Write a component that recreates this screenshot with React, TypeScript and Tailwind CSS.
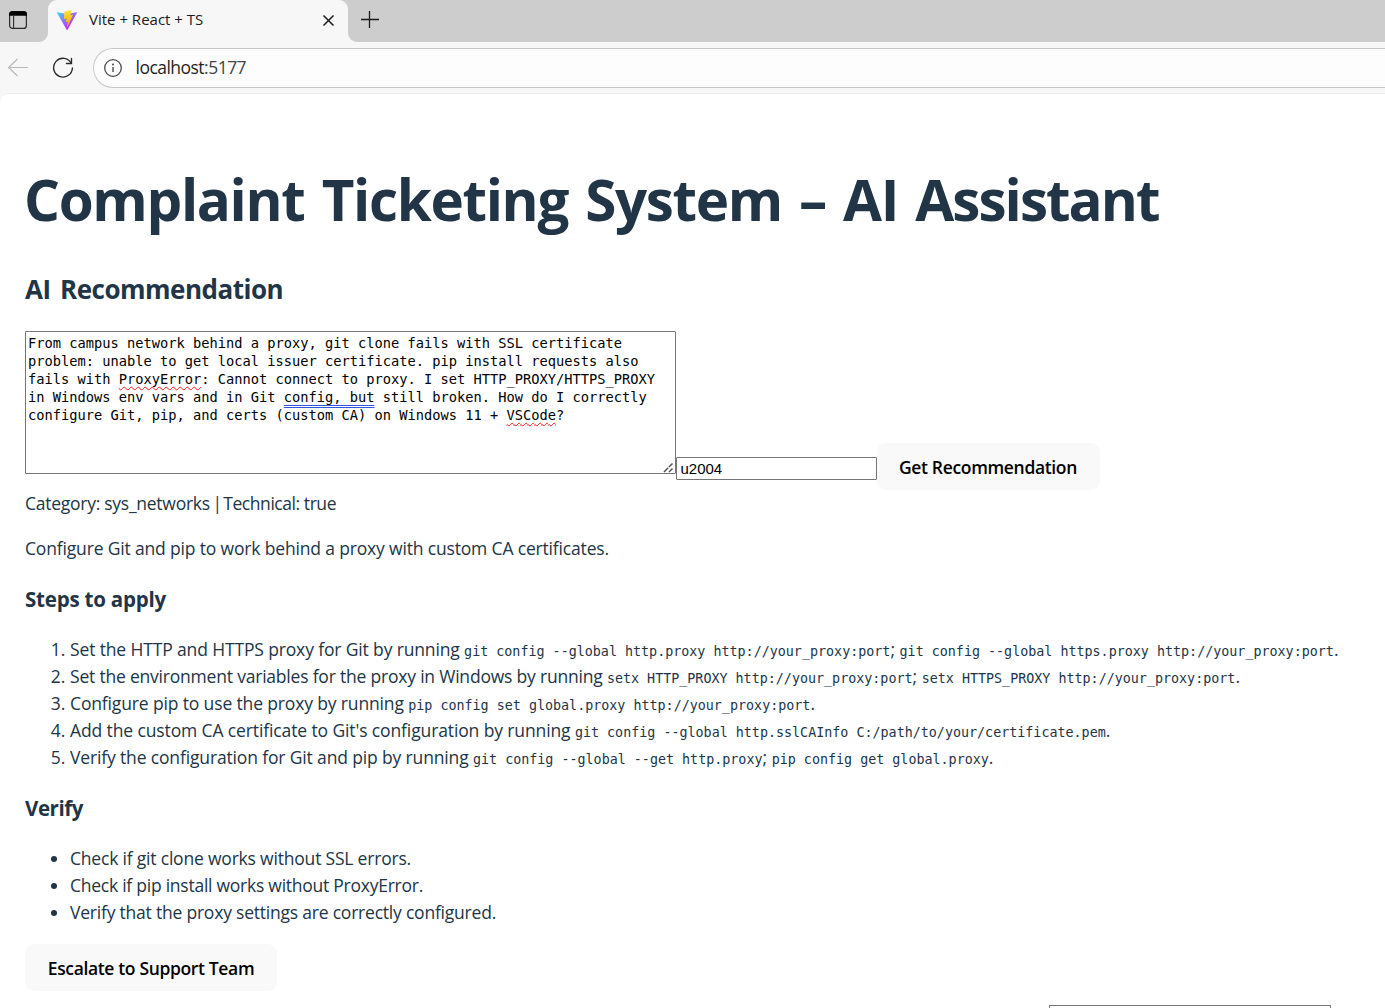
import type { ReactNode } from "react";

function ViteLogo() {
  return (
    <svg width="20" height="20" viewBox="0 0 256 257" aria-hidden="true">
      <defs>
        <linearGradient id="vite-a" x1="-.828%" x2="57.636%" y1="7.652%" y2="78.411%">
          <stop offset="0%" stopColor="#41D1FF" />
          <stop offset="100%" stopColor="#BD34FE" />
        </linearGradient>
        <linearGradient id="vite-b" x1="43.376%" x2="50.316%" y1="2.242%" y2="89.03%">
          <stop offset="0%" stopColor="#FFEA83" />
          <stop offset="8.333%" stopColor="#FFDD35" />
          <stop offset="100%" stopColor="#FFA800" />
        </linearGradient>
      </defs>
      <path
        fill="url(#vite-a)"
        d="M255.153 37.938L134.897 252.976c-2.483 4.44-8.862 4.466-11.382.048L.875 37.958c-2.746-4.814 1.371-10.646 6.827-9.67l120.385 21.517a6.537 6.537 0 0 0 2.322-.004l117.867-21.483c5.438-.991 9.574 4.796 6.877 9.62Z"
      />
      <path
        fill="url(#vite-b)"
        d="M185.432.063L96.44 17.501a3.268 3.268 0 0 0-2.634 3.014l-5.474 92.456a3.268 3.268 0 0 0 3.997 3.378l24.777-5.718c2.318-.535 4.413 1.507 3.936 3.838l-7.361 36.047c-.495 2.426 1.782 4.5 4.151 3.78l15.304-4.649c2.372-.72 4.652 1.36 4.15 3.788l-11.698 56.621c-.732 3.542 3.979 5.473 5.943 2.437l1.313-2.028l72.516-144.72c1.215-2.423-.88-5.186-3.54-4.672l-25.505 4.922c-2.396.462-4.435-1.77-3.759-4.114l16.646-57.705c.677-2.35-1.37-4.583-3.769-4.113Z"
      />
    </svg>
  );
}

function TabStrip() {
  return (
    <div className="flex h-[42px]">
      <div className="flex w-12 rounded-br-[9px] bg-[#cdcdcd] pl-2 pt-[10px]">
        <svg width="20" height="20" viewBox="0 0 20 20" fill="none" aria-hidden="true">
          <rect x="1.6" y="1.6" width="16.8" height="16.8" rx="3" stroke="#2b2b2b" strokeWidth="1.2" />
          <path d="M1 5.8V4.2a3 3 0 0 1 3-3h12a3 3 0 0 1 3 3v1.6z" fill="#000" />
          <path d="M5.6 6v12" stroke="#2b2b2b" strokeWidth="1.1" />
        </svg>
      </div>
      <div className="w-[300px] bg-[#cdcdcd]">
        <div className="flex h-full items-center rounded-t-[9px] bg-[#f7f7f7] pl-[9px] pr-[13px]">
          <div className="mt-[-3px]">
            <ViteLogo />
          </div>
          <span className="ml-3 mt-[-5px] flex-1 whitespace-nowrap text-[15px] leading-5 text-[#1b1b1b]">
            Vite + React + TS
          </span>
          <svg className="mt-[-1px]" width="13" height="13" viewBox="0 0 13 13" aria-hidden="true">
            <path d="M1.5 1.5l10 10M11.5 1.5l-10 10" stroke="#1b1b1b" strokeWidth="1.5" />
          </svg>
        </div>
      </div>
      <div className="flex-1 rounded-bl-[9px] bg-[#cdcdcd] pl-3 pt-[10px]">
        <svg width="20" height="20" viewBox="0 0 20 20" aria-hidden="true">
          <path d="M1 9.5h18M9.5 1v17" stroke="#1b1b1b" strokeWidth="1.3" />
        </svg>
      </div>
    </div>
  );
}

function Toolbar() {
  return (
    <div className="flex h-[51px] pt-[6px]">
      <svg className="ml-[7px] mt-[9px]" width="22" height="22" viewBox="0 0 22 22" fill="none" aria-hidden="true">
        <path d="M21 10.5H1.6M10.5 2L1.6 10.5l8.9 8.5" stroke="#b9b9b9" strokeWidth="1.2" />
      </svg>
      <svg className="ml-[23px] mt-[9px]" width="22" height="22" viewBox="0 0 22 22" fill="none" aria-hidden="true">
        <path d="M19.3 6.2A9.4 9.4 0 1 0 20.4 11" stroke="#2b2b2b" strokeWidth="1.35" strokeLinecap="round" />
        <path d="M19.5 1.5v5h-5" stroke="#2b2b2b" strokeWidth="1.35" strokeLinecap="round" />
      </svg>
      <div className="ml-[19px] flex h-10 flex-1 items-center rounded-l-full border border-r-0 border-[#c9c9c9] bg-[#fdfdfd] pl-[9px]">
        <svg width="20" height="20" viewBox="0 0 20 20" fill="none" aria-hidden="true">
          <circle cx="10" cy="10" r="8.3" stroke="#4a4a4a" strokeWidth="1.3" />
          <path d="M10 9v5" stroke="#4a4a4a" strokeWidth="1.4" />
          <circle cx="10" cy="6.6" r="1" fill="#4a4a4a" />
        </svg>
        <span className="ml-[12.5px] mt-[-2px] whitespace-nowrap text-[17.5px] tracking-[-0.03em] text-[#1f1f1f]">
          localhost<span className="text-[#444]">:5177</span>
        </span>
      </div>
    </div>
  );
}

function Misspelt({ children }: { children: ReactNode }) {
  return (
    <span className="underline decoration-[#ff1a1a] decoration-wavy decoration-[1.3px] underline-offset-[2px] [text-decoration-skip-ink:none]">
      {children}
    </span>
  );
}

function Code({ children }: { children: ReactNode }) {
  return <code className="font-['DejaVu_Sans_Mono',monospace] text-[13.36px] leading-none">{children}</code>;
}

function Complaint() {
  return (
    <div className="relative h-[143px] w-[651px] whitespace-pre rounded-[1px] border border-[#767676] bg-white px-[2px] pt-[2px] font-['DejaVu_Sans_Mono',monospace] text-[13.71px] leading-[18px] text-black">
      <p>From campus network behind a proxy, git clone fails with SSL certificate</p>
      <p>problem: unable to get local issuer certificate. pip install requests also</p>
      <p>
        fails with <Misspelt>ProxyError</Misspelt>: Cannot connect to proxy. I set HTTP_PROXY/HTTPS_PROXY
      </p>
      <p>
        in Windows env vars and in Git{" "}
        <span className="underline decoration-[#3355e0] decoration-double decoration-1 underline-offset-[3px] [text-decoration-skip-ink:none]">
          config, but
        </span>{" "}
        still broken. How do I correctly
      </p>
      <p>
        configure Git, pip, and certs (custom CA) on Windows 11 + <Misspelt>VSCode</Misspelt>?
      </p>
      <svg className="absolute bottom-0 right-[1px]" width="11" height="11" viewBox="0 0 11 11" aria-hidden="true">
        <path d="M1 10L9.5 1.5M6 10l3.5-3.5" stroke="#555" strokeWidth="1.5" strokeDasharray="6 1" />
      </svg>
    </div>
  );
}

const button =
  "h-[47px] rounded-[9px] bg-[#f9f9f9] text-[17.5px] font-semibold leading-[27px] text-black whitespace-nowrap";

export default function App() {
  return (
    <div className="flex h-[1008px] w-[1385px] flex-col overflow-hidden bg-[#f7f7f7] font-['Open_Sans',sans-serif]">
      <TabStrip />
      <Toolbar />
      <main className="flex-1 overflow-hidden whitespace-nowrap rounded-tl-[9px] border-t border-[#ececec] bg-white pl-[25px] pt-[74px] text-[17.5px] leading-[27px] text-[#213547]">
        <h1 className="ml-[-1px] h-[63px] text-[56.5px] font-bold leading-[63px] tracking-[-0.0235em] [word-spacing:3.8px]">
          Complaint Ticketing System – AI <span className="tracking-[-0.0345em]">Assistant</span>
        </h1>
        <h2 className="mt-10 text-[26px] font-bold leading-9 tracking-[-0.019em] [word-spacing:3.2px]">
          AI Recommendation
        </h2>
        <div className="mt-6 flex h-[159px] items-end">
          <div className="mb-4">
            <Complaint />
          </div>
          <input
            className="mb-[10px] h-[23px] w-[201px] rounded-[1px] border border-[#767676] bg-white px-[3.5px] font-['Liberation_Sans',sans-serif] text-[15px] text-black outline-none"
            defaultValue="u2004"
          />
          <button className={`${button} w-[223px] pr-[1px] pt-[2px] tracking-[-0.0194em]`}>Get Recommendation</button>
        </div>
        <p className="tracking-[-0.0252em]">
          <span className="tracking-[-0.015em]">Category: sys_networks</span>
          <span className="tracking-[-0.1em]"> | </span>
          Technical: true
        </p>
        <p className="mt-[18px] tracking-[-0.0094em]">
          Configure Git and pip to work behind a proxy with custom CA certificates.
        </p>
        <h3 className="mt-6 text-[20.5px] font-bold tracking-[-0.0103em]">Steps to apply</h3>
        <ol className="mt-[23px] list-decimal pl-[45px]">
          <li>
            <span className="tracking-[-0.008em]">Set the HTTP and HTTPS proxy for Git by running </span>
            <Code>git config --global http.proxy http://your_proxy:port</Code>;{" "}
            <Code>git config --global https.proxy http://your_proxy:port</Code>.
          </li>
          <li>
            <span className="tracking-[-0.0117em]">
              Set the environment variables for the proxy in Windows by running{" "}
            </span>
            <Code>setx HTTP_PROXY http://your_proxy:port</Code>;{" "}
            <Code>setx HTTPS_PROXY http://your_proxy:port</Code>.
          </li>
          <li>
            <span className="tracking-[-0.0082em]">Configure pip to use the proxy by running </span>
            <Code>pip config set global.proxy http://your_proxy:port</Code>.
          </li>
          <li>
            <span className="tracking-[-0.0068em]">
              Add the custom CA certificate to Git's configuration by running{" "}
            </span>
            <Code>git config --global http.sslCAInfo C:/path/to/your/certificate.pem</Code>.
          </li>
          <li>
            <span className="tracking-[-0.0084em]">Verify the configuration for Git and pip by running </span>
            <Code>git config --global --get http.proxy</Code>; <Code>pip config get global.proxy</Code>.
          </li>
        </ol>
        <h3 className="mt-6 text-[20.5px] font-bold tracking-[-0.0211em]">Verify</h3>
        <ul className="mt-[23px] list-disc pl-[45px]">
          <li className="tracking-[-0.0112em]">Check if git clone works without SSL errors.</li>
          <li className="tracking-[-0.0143em]">Check if pip install works without ProxyError.</li>
          <li className="tracking-[-0.0122em]">Verify that the proxy settings are correctly configured.</li>
        </ul>
        <button className={`${button} mt-[18px] block w-[252px] pt-[2px] tracking-[-0.02em]`}>
          Escalate to Support Team
        </button>
        <div className="ml-[1024px] mt-[14px] h-10 w-[282px] border border-[#767676] bg-white" />
      </main>
    </div>
  );
}
